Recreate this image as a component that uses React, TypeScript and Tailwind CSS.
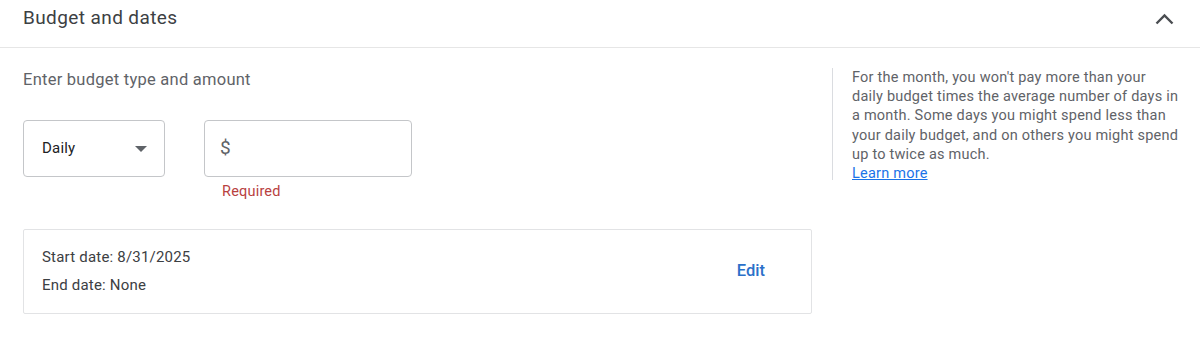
export default function App() {
  return (
    <div className="w-[1200px] h-[348px] bg-white font-['Roboto',sans-serif] overflow-hidden">
      {/* header */}
      <div className="h-[48px] flex items-start justify-between pl-[23px] pr-[26px] border-b border-[#e6e6e6]">
        <h2 className="mt-[6px] text-[19px] leading-[24px] tracking-[0.4px] text-[#3c4043]">Budget and dates</h2>
        <svg className="mt-[13px]" width="19" height="12" viewBox="0 0 19 12" fill="none">
          <path d="M1.5 10.5L9.5 2.5L17.5 10.5" stroke="#4a4d51" strokeWidth="2.4" />
        </svg>
      </div>

      <div className="flex pl-[23px] pt-[18px]">
        {/* left */}
        <div className="w-[789px]">
          <p className="mt-[4px] text-[16.5px] leading-[20px] tracking-[0.25px] text-[#5f6368]">Enter budget type and amount</p>

          <div className="flex gap-[39px] mt-[30px]">
            <div className="w-[142px] h-[57px] border border-[#c4c6c9] rounded-[4px] flex items-center justify-between pl-[18px] pr-[17px]">
              <span className="text-[15px] tracking-[0.2px] text-[#202124]">Daily</span>
              <svg width="12" height="6" viewBox="0 0 12 6">
                <path d="M0 0L6 6L12 0Z" fill="#5f6368" />
              </svg>
            </div>
            <div>
              <div className="w-[208px] h-[57px] border border-[#c4c6c9] rounded-[4px] flex items-center pl-[15px]">
                <span className="text-[19px] text-[#5f6368]">$</span>
              </div>
              <p className="mt-[6px] pl-[18px] text-[14.5px] leading-[18px] tracking-[0.2px] text-[#b8413f]">Required</p>
            </div>
          </div>

          <div className="mt-[28px] h-[85px] border border-[#e2e3e5] rounded-[2px] flex items-center justify-between pl-[18px] pr-[46px]">
            <div className="flex flex-col gap-[10px] -mt-[2px] text-[15px] leading-[18px] tracking-[0.2px] text-[#3c4043]">
              <span>Start date: 8/31/2025</span>
              <span>End date: None</span>
            </div>
            <span className="text-[16.5px] font-medium text-[#2b70c9]">Edit</span>
          </div>
        </div>

        {/* right */}
        <div className="ml-[20px] mt-[2px] h-[112px] border-l border-[#dadce0] pl-[19px] w-[360px]">
          <p className="mt-[0px] text-[14.5px] leading-[19.2px] tracking-[0.22px] text-[#5f6368]">
            For the month, you won't pay more than your
            <br />
            daily budget times the average number of days in
            <br />
            a month. Some days you might spend less than
            <br />
            your daily budget, and on others you might spend
            <br />
            up to twice as much.
            <br />
            <a className="text-[#1a73e8] underline">Learn more</a>
          </p>
        </div>
      </div>
    </div>
  )
}
